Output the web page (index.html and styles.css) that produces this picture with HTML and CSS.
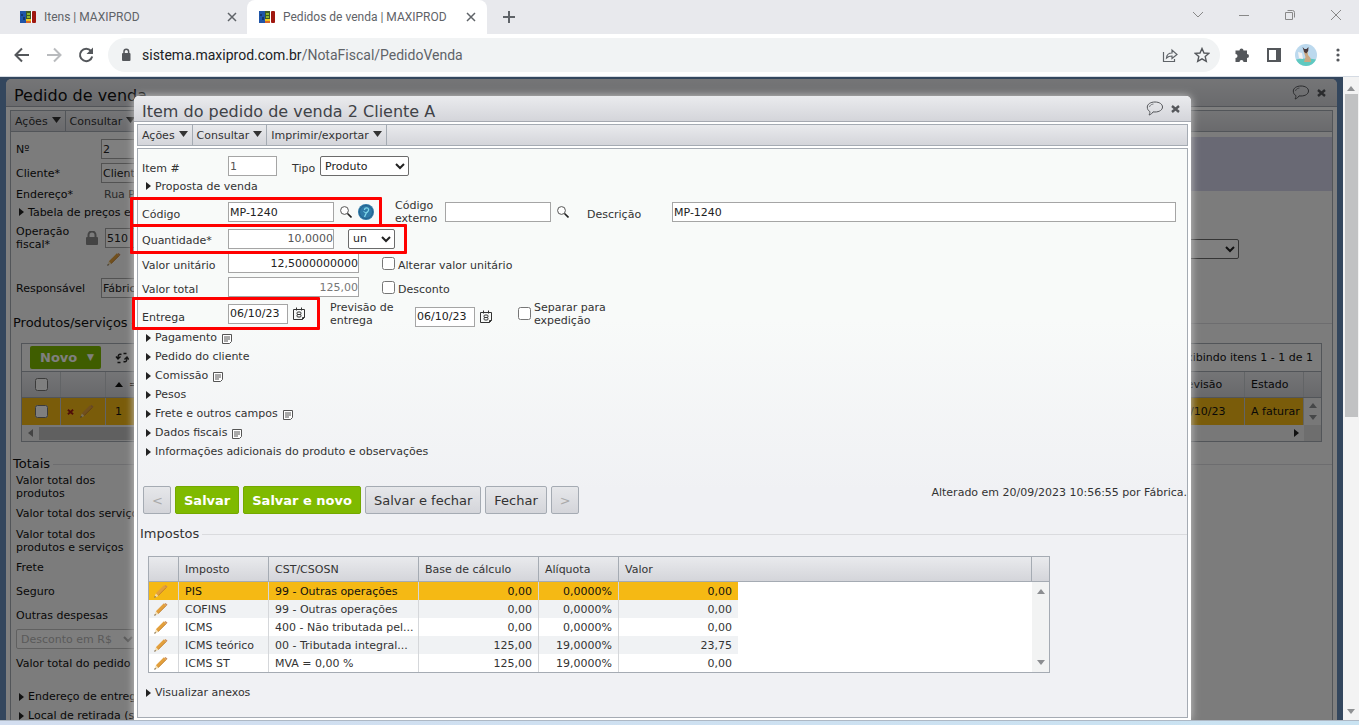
FILE: index.html
```html
<!DOCTYPE html>
<html lang="pt-BR">
<head>
  <meta charset="UTF-8" />
  <meta name="viewport" content="width=device-width, initial-scale=1.0"/>
  <title>Pedidos de venda | MAXIPROD</title>
  <link rel="stylesheet" href="styles.css">
</head>
<body>

  <!-- shared icons -->
  <svg class="sprite" aria-hidden="true">
    <symbol id="logo" viewBox="0 0 16 12">
      <rect x="0" y="0" width="6" height="12" fill="#1f55a8"/>
      <path d="M1 3h2v2H1zM3 6h2v3H3z" fill="#16376f"/>
      <rect x="6" y="0" width="5" height="8" fill="#3d5a24"/>
      <path d="M7 2h3v2H7zM7 5h3v2H7z" fill="#8db52c"/>
      <rect x="6" y="8" width="5" height="2" fill="#f0c81c"/>
      <rect x="6" y="10" width="5" height="2" fill="#d9672b"/>
      <path d="M11 0h1v12h-1z" fill="#fff"/>
      <rect x="12" y="0" width="4" height="12" rx="1" fill="#a01810"/>
    </symbol>
    <symbol id="x" viewBox="0 0 10 10"><path d="M1 1l8 8M9 1L1 9" stroke="currentColor" fill="none"/></symbol>
    <symbol id="x-bold" viewBox="0 0 9 8"><path d="M1 1l7 6M8 1L1 7" stroke="currentColor" stroke-width="2.4" fill="none"/></symbol>
    <symbol id="bubble" viewBox="0 0 18 15">
      <path d="M9 1c4.500 0 7.500 2.200 7.500 5s-3 5-7.500 5l-2-.1C6 12.500 5 13.500 3 14c.8-1.200 1-2.200.8-3.500C2 9.500 1.300 8 1.300 6c0-2.800 3.200-5 7.700-5z" stroke="currentColor" fill="none"/>
      <path d="M3.500 6c.2-1.500 1.500-2.700 4-3" stroke="currentColor" fill="none" stroke-width=".7"/>
    </symbol>
    <symbol id="down" viewBox="0 0 9 6"><path d="M0 0h9L4.500 6z" fill="currentColor"/></symbol>
    <symbol id="pencil" viewBox="0 0 14 13">
      <path d="M3 9.500L11 1.500" stroke="#e3a03c" stroke-width="3.200" fill="none"/>
      <path d="M4 10.800L12.400 2.400" stroke="#b9772a" stroke-width=".8" fill="none"/>
      <path d="M10.500 1l1-1 2 1.800-1 1z" fill="#c98a55"/>
      <path d="M1.800 8.600L.3 12.700l4-1.700z" fill="#f2dcae"/>
      <path d="M.9 11.100l-.6 1.700 1.700-.7z" fill="#4a3a28"/>
    </symbol>
    <symbol id="search" viewBox="0 0 12 12">
      <circle cx="4.500" cy="4.500" r="3.900" fill="#fff" stroke="#555"/>
      <path d="M7.500 7.500l4 4" stroke="#222" stroke-width="1.600"/>
    </symbol>
    <symbol id="help" viewBox="0 0 16 16">
      <circle cx="8" cy="8" r="8" fill="#2f7aa8"/>
      <circle cx="8" cy="8" r="6.500" fill="none" stroke="#24618c"/>
      <path d="M6.500 6C6.500 3 10.800 3.200 10.600 6 10.500 8 8.500 8 8 9.500L6.500 13" stroke="#7fd6e8" stroke-width="1.300" fill="none"/>
      <path d="M5.500 7.500L8 9" stroke="#7fd6e8"/>
    </symbol>
    <symbol id="calendar" viewBox="0 0 12 13">
      <path d="M.5 2.500h11v8l-2 2h-9zM3.500.5v3M8.500.5v3M11.500 10.500h-2v2" stroke="#333" fill="none"/>
      <rect x="4" y="5" width="4" height="2.500" rx="1" stroke="#333" fill="none"/>
      <rect x="4" y="7.500" width="4" height="2.500" rx="1" stroke="#333" fill="none"/>
    </symbol>
    <symbol id="note" viewBox="0 0 10 10">
      <path d="M.5.5h9v7l-2 2h-7z" stroke="#555" fill="#fff"/>
      <path d="M2 3h6M2 5h6M2 7h4" stroke="#555"/>
    </symbol>
    <symbol id="up-small" viewBox="0 0 8 5"><path d="M0 5h8L4 0z" fill="currentColor"/></symbol>
    <symbol id="down-small" viewBox="0 0 8 5"><path d="M0 0h8L4 5z" fill="currentColor"/></symbol>
  </svg>

  <header class="browser">
    <div class="tabs">
      <div class="tab">
        <svg class="favicon"><use href="#logo"/></svg>
        <span class="tab-title">Itens | MAXIPROD</span>
        <button class="plain" aria-label="Fechar aba"><svg width="10" height="10" stroke-width="1.500"><use href="#x"/></svg></button>
      </div>
      <div class="tab active">
        <svg class="favicon"><use href="#logo"/></svg>
        <span class="tab-title">Pedidos de venda | MAXIPROD</span>
        <button class="plain" aria-label="Fechar aba"><svg width="10" height="10" stroke-width="1.500"><use href="#x"/></svg></button>
      </div>
      <button class="plain new-tab" aria-label="Nova aba"><svg width="12" height="12"><path d="M6 0v12M0 6h12" stroke="currentColor" stroke-width="2"/></svg></button>
      <div class="window-buttons">
        <button class="plain" aria-label="Abas"><svg width="12" height="8"><path d="M1 1l5 5 5-5" stroke="currentColor" fill="none"/></svg></button>
        <button class="plain" aria-label="Minimizar"><svg width="12" height="12"><path d="M1 6.500h10" stroke="currentColor"/></svg></button>
        <button class="plain" aria-label="Restaurar"><svg width="12" height="12"><path d="M1.500 3.500h7v7h-7zM3.500 1.500h5q2 0 2 2v5" stroke="currentColor" fill="none"/></svg></button>
        <button class="plain" aria-label="Fechar"><svg width="12" height="12"><path d="M1 1l10 10M11 1L1 11" stroke="currentColor"/></svg></button>
      </div>
    </div>
    <div class="toolbar">
      <button class="plain" aria-label="Voltar"><svg width="16" height="16"><path d="M15 8H2M8 1.500L1.500 8 8 14.500" stroke="#54575b" stroke-width="2" fill="none"/></svg></button>
      <button class="plain" aria-label="Avançar"><svg width="16" height="16"><path d="M1 8h13M8 1.500L14.500 8 8 14.500" stroke="#b9bbbe" stroke-width="2" fill="none"/></svg></button>
      <button class="plain" aria-label="Recarregar"><svg width="16" height="16"><path d="M13 4A6.200 6.200 0 1 0 14.200 9.500" stroke="#54575b" stroke-width="2" fill="none"/><path d="M15 .5V7H8.500z" fill="#54575b"/></svg></button>
      <div class="omnibox">
        <svg width="10" height="14"><rect x="1" y="5" width="8.500" height="8" rx="1" fill="#54575b"/><path d="M3 6V3.500a2.300 2.300 0 0 1 4.600 0V6" stroke="#54575b" stroke-width="1.500" fill="none"/></svg>
        <span class="url">sistema.maxiprod.com.br<span class="path">/NotaFiscal/PedidoVenda</span></span>
        <button class="plain" aria-label="Compartilhar"><svg width="16" height="16"><path d="M1.500 5v9.500h11V12M4.500 11c.3-3.500 2.500-5 5.500-5V3l5 4.500-5 4V9c-2.500 0-4 .5-5.500 2z" stroke="#5f6368" stroke-width="1.200" fill="none"/></svg></button>
        <button class="plain" aria-label="Favoritar"><svg width="16" height="16"><path d="M8 1.500l2 4.500 4.800.4-3.600 3.200 1.100 4.800L8 11.900l-4.300 2.500 1.100-4.800L1.200 6.400 6 6z" stroke="#54575b" stroke-width="1.400" fill="none"/></svg></button>
      </div>
      <button class="plain" aria-label="Extensões"><svg width="16" height="16"><path d="M2 3.500h3.500a2 2 0 1 1 4 0H13V7a2 2 0 1 1 0 4v4H9.500a2 2 0 0 0-4 0H1.500v-4a2 2 0 0 0 0-4V3.500z" fill="#54575b"/></svg></button>
      <button class="plain" aria-label="Painel lateral"><svg width="16" height="16"><path d="M2 2h12v12H2z" fill="none" stroke="#54575b" stroke-width="2"/><path d="M10 2h4v12h-4z" fill="#54575b"/></svg></button>
      <button class="plain avatar" aria-label="Perfil"><svg width="22" height="22"><circle cx="11" cy="11" r="11" fill="#bcd9ee"/><path d="M1 15.500a11 11 0 0 0 20 0q-10-2-20 0z" fill="#5fc9c0"/><path d="M8.500 7h4l.5 4 2.500 3 .5 4H9l1.500-5z" fill="#caa883"/><path d="M7.500 3l2 2h2l2-2-.3 4-2 2.500-2-1.500z" fill="#4a3a3c"/><path d="M3 8l4 1 1 6-4-1z" fill="#f4f4f4"/></svg></button>
      <button class="plain" aria-label="Menu"><svg width="16" height="16"><circle cx="8" cy="3" r="1.600" fill="#54575b"/><circle cx="8" cy="8" r="1.600" fill="#54575b"/><circle cx="8" cy="13" r="1.600" fill="#54575b"/></svg></button>
    </div>
  </header>

  <div class="viewport">
    <main class="page">

      <!-- order window, behind the dialog -->
      <section class="window">
        <div class="title-bar">
          <h1>Pedido de venda</h1>
          <svg width="18" height="15"><use href="#bubble"/></svg>
          <svg width="9" height="8"><use href="#x-bold"/></svg>
        </div>
        <div class="window-body">
          <nav class="menu">
            <button>Ações <svg><use href="#down"/></svg></button>
            <button>Consultar <svg><use href="#down"/></svg></button>
          </nav>
          <div class="order">
            <div class="order-top">
              <div class="order-fields">
                <div class="order-row"><label for="numero">Nº</label><input id="numero" value="2"></div>
                <div class="order-row"><label for="cliente">Cliente*</label><input id="cliente" value="Cliente"></div>
                <div class="order-row low"><span class="caption">Endereço*</span><span class="address">Rua P</span></div>
              </div>
              <div class="notice"></div>
            </div>
            <a href="#" class="toggle low">Tabela de preços e</a>
            <div class="operation">
              <div>
                <div class="operation-row">
                  <label for="operacao">Operação<br>fiscal*</label>
                  <svg width="12" height="14"><rect x="0" y="6" width="12" height="8" rx="1" fill="#888"/><path d="M2.500 7V4a3.500 3.500 0 0 1 7 0v3" stroke="#888" stroke-width="2" fill="none"/></svg>
                  <input id="operacao" value="510">
                </div>
                <svg class="edit" width="14" height="13"><use href="#pencil"/></svg>
              </div>
              <select aria-label="Forma"><option></option></select>
            </div>
            <div class="order-row responsible"><label for="responsavel">Responsável</label><input id="responsavel" value="Fábrica"></div>

            <h2 class="legend products">Produtos/serviços</h2>
            <div class="items">
              <div class="items-bar">
                <button class="new">Novo <small>▼</small></button>
                <svg width="14" height="12"><path d="M6.500 2.500C4 1.500 3 3 3 6M1 4.500L3 7l2.500-2.500M2.500 10.500h3M8.500 9.500C11 10.500 12 9 12 6M9.500 7.500L12 5l2 2.500M8.500 1.500h3" stroke="#222" stroke-width="1.400" fill="none"/></svg>
                <span class="count">Exibindo itens 1 - 1 de 1</span>
              </div>
              <div class="items-line items-head">
                <span class="tick"><input type="checkbox" aria-label="Todos"></span>
                <span class="tools"></span>
                <span class="position"><svg width="8" height="5"><use href="#up-small"/></svg> =</span>
                <span class="date">Previsão</span>
                <span class="state">Estado</span>
                <span class="end"></span>
              </div>
              <div class="items-line items-row">
                <span class="tick"><input type="checkbox" aria-label="Item 1"></span>
                <span class="tools"><svg width="7" height="6" color="#a01c10"><use href="#x-bold"/></svg><svg width="14" height="13"><use href="#pencil"/></svg></span>
                <span class="position">1</span>
                <span class="date">06/10/23</span>
                <span class="state">A faturar</span>
                <span class="end arrows"><svg width="8" height="5"><use href="#up-small"/></svg><svg width="8" height="5"><use href="#down-small"/></svg></span>
              </div>
              <div class="items-scroll"><i class="left"></i><i class="bar"></i><i class="right"></i><i class="corner"></i></div>
            </div>

            <h2 class="legend totals">Totais</h2>
            <ul class="sums">
              <li>Valor total dos<br>produtos</li>
              <li>Valor total dos serviços</li>
              <li class="tall">Valor total dos<br>produtos e serviços</li>
              <li>Frete</li>
              <li>Seguro</li>
              <li>Outras despesas</li>
              <li><select disabled aria-label="Desconto"><option>Desconto em R$</option></select></li>
              <li>Valor total do pedido</li>
            </ul>
            <a href="#" class="toggle">Endereço de entrega</a>
            <a href="#" class="toggle">Local de retirada (s</a>
          </div>
        </div>
      </section>

      <div class="shade"></div>

      <section class="dialog" role="dialog" aria-labelledby="dialog-title">
        <div class="title-bar">
          <h1 id="dialog-title">Item do pedido de venda 2 Cliente A</h1>
          <svg width="18" height="15"><use href="#bubble"/></svg>
          <svg width="9" height="8"><use href="#x-bold"/></svg>
        </div>
        <div class="dialog-body">
          <nav class="menu">
            <button>Ações <svg><use href="#down"/></svg></button>
            <button>Consultar <svg><use href="#down"/></svg></button>
            <button>Imprimir/exportar <svg><use href="#down"/></svg></button>
          </nav>
          <form class="item-form">
            <div class="row">
              <label class="name" for="item">Item #</label>
              <input id="item" class="w-small muted" value="1">
              <label class="type" for="tipo">Tipo</label>
              <select id="tipo" class="w-type"><option>Produto</option></select>
            </div>
            <a href="#" class="toggle proposal">Proposta de venda</a>

            <div class="row code marked">
              <label class="name" for="codigo">Código</label>
              <input id="codigo" class="w-medium" value="MP-1240">
              <svg class="find" width="12" height="12"><use href="#search"/></svg>
              <svg class="info" width="16" height="16"><use href="#help"/></svg>
              <label class="external" for="externo">Código externo</label>
              <input id="externo" class="w-medium">
              <svg class="find" width="12" height="12"><use href="#search"/></svg>
              <label class="description" for="descricao">Descrição</label>
              <input id="descricao" class="w-fill" value="MP-1240">
            </div>
            <div class="row quantity marked">
              <label class="name" for="quantidade">Quantidade*</label>
              <input id="quantidade" class="w-medium number muted" value="10,0000">
              <select class="w-unit" aria-label="Unidade"><option>un</option></select>
            </div>
            <div class="row">
              <label class="name" for="unitario">Valor unitário</label>
              <input id="unitario" class="w-large number" value="12,5000000000">
              <input type="checkbox" id="alterar"><label for="alterar">Alterar valor unitário</label>
            </div>
            <div class="row">
              <label class="name" for="total">Valor total</label>
              <input id="total" class="w-large number faded" value="125,00">
              <input type="checkbox" id="desconto"><label for="desconto">Desconto</label>
            </div>
            <div class="row delivery marked">
              <label class="name" for="entrega">Entrega</label>
              <input id="entrega" class="w-date" value="06/10/23">
              <svg class="day" width="12" height="13"><use href="#calendar"/></svg>
              <label class="forecast" for="previsao">Previsão de<br>entrega</label>
              <div class="planned">
                <input id="previsao" class="w-date" value="06/10/23">
                <svg class="day" width="12" height="13"><use href="#calendar"/></svg>
              </div>
              <input type="checkbox" id="separar"><label class="split" for="separar">Separar para<br>expedição</label>
            </div>

            <a href="#" class="toggle">Pagamento <svg><use href="#note"/></svg></a>
            <a href="#" class="toggle">Pedido do cliente</a>
            <a href="#" class="toggle">Comissão <svg><use href="#note"/></svg></a>
            <a href="#" class="toggle">Pesos</a>
            <a href="#" class="toggle">Frete e outros campos <svg><use href="#note"/></svg></a>
            <a href="#" class="toggle">Dados fiscais <svg><use href="#note"/></svg></a>
            <a href="#" class="toggle">Informações adicionais do produto e observações</a>

            <div class="actions">
              <button type="button" disabled>&lt;</button>
              <button type="button" class="primary">Salvar</button>
              <button type="button" class="primary">Salvar e novo</button>
              <button type="button">Salvar e fechar</button>
              <button type="button">Fechar</button>
              <button type="button" disabled>&gt;</button>
              <span class="changed">Alterado em 20/09/2023 10:56:55 por Fábrica.</span>
            </div>

            <h2 class="legend">Impostos</h2>
            <table class="taxes">
              <colgroup><col class="c-edit"><col class="c-tax"><col class="c-cst"><col class="c-base"><col class="c-rate"><col class="c-value"><col><col class="c-scroll"></colgroup>
              <thead>
                <tr><th></th><th>Imposto</th><th>CST/CSOSN</th><th>Base de cálculo</th><th>Alíquota</th><th colspan="2">Valor</th><th></th></tr>
              </thead>
              <tbody>
                <tr class="selected">
                  <td><svg><use href="#pencil"/></svg></td><td>PIS</td><td>99 - Outras operações</td><td>0,00</td><td>0,0000%</td><td>0,00</td>
                  <td class="blank" rowspan="5"></td>
                  <td class="scroll" rowspan="5"><div class="arrows"><svg width="8" height="5"><use href="#up-small"/></svg><svg width="8" height="5"><use href="#down-small"/></svg></div></td>
                </tr>
                <tr><td><svg><use href="#pencil"/></svg></td><td>COFINS</td><td>99 - Outras operações</td><td>0,00</td><td>0,0000%</td><td>0,00</td></tr>
                <tr><td><svg><use href="#pencil"/></svg></td><td>ICMS</td><td>400 - Não tributada pel...</td><td>0,00</td><td>0,0000%</td><td>0,00</td></tr>
                <tr><td><svg><use href="#pencil"/></svg></td><td>ICMS teórico</td><td>00 - Tributada integral...</td><td>125,00</td><td>19,0000%</td><td>23,75</td></tr>
                <tr><td><svg><use href="#pencil"/></svg></td><td>ICMS ST</td><td>MVA = 0,00 %</td><td>125,00</td><td>19,0000%</td><td>0,00</td></tr>
              </tbody>
            </table>
            <a href="#" class="toggle attachments">Visualizar anexos</a>
          </form>
        </div>
      </section>
    </main>

    <div class="scrollbar">
      <svg width="8" height="5"><use href="#up-small"/></svg>
      <div class="thumb"></div>
      <svg width="8" height="5"><use href="#down-small"/></svg>
    </div>
  </div>
  <footer class="taskbar"></footer>

</body>
</html>
```

FILE: styles.css
```css
*, *::before, *::after {
  box-sizing: border-box;
}

* {
  margin: 0;
  padding: 0;
}

body {
  font-family: Verdana, 'DejaVu Sans', sans-serif;
  font-size: 11px;
  line-height: 13px;
  color: #333;
  display: flex;
  flex-direction: column;
  height: 100vh;
  overflow: hidden;
}

.sprite {
  position: absolute;
  width: 0;
  height: 0;
}

svg {
  display: block;
  flex: none;
}

a {
  color: inherit;
  text-decoration: none;
}

input, select, button {
  font: inherit;
}

.plain {
  display: flex;
  align-items: center;
  justify-content: center;
  border: none;
  background: none;
  color: #5f6368;
}

/* browser frame */
.browser {
  font-family: 'Segoe UI', Roboto, sans-serif;
  flex: none;
}

.tabs {
  display: flex;
  height: 34px;
  background: #e8e9ed;
}

.tab {
  display: flex;
  align-items: center;
  gap: 8px;
  width: 247px;
  padding: 0 10px 0 20px;
  font-size: 12px;
  color: #5f6368;
}

.tab.active {
  width: 240px;
  padding: 0 11px 0 12px;
  background: #fff;
  border-radius: 8px 8px 0 0;
}

.tab-title {
  flex: 1;
  white-space: nowrap;
}

.favicon {
  width: 16px;
  height: 12px;
}

.new-tab {
  width: 44px;
}

.window-buttons {
  display: flex;
  margin-left: auto;
  padding-bottom: 5px;
}

.window-buttons .plain {
  width: 46px;
  color: #888;
}

.toolbar {
  display: flex;
  align-items: center;
  gap: 16px;
  height: 43px;
  padding: 0 13px 0 14px;
  background: #fff;
  border-bottom: 1px solid #d5dbe3;
}

.omnibox {
  display: flex;
  align-items: center;
  flex: 1;
  gap: 16px;
  height: 34px;
  margin: 0 -2px 0 -2px;
  padding: 0 10px 0 13px;
  border-radius: 17px;
  background: #f1f3f4;
}

.url {
  flex: 1;
  margin-left: -5px;
  font-size: 14px;
  line-height: 20px;
  color: #202124;
}

.url .path {
  color: #5f6368;
}

.toolbar .avatar {
  margin: 0 -3px;
}

/* page area */
.viewport {
  display: flex;
  flex: 1;
  min-height: 0;
}

.page {
  position: relative;
  flex: 1;
  min-width: 0;
  padding: 2px 6px 0 6px;
  overflow: hidden;
  background: #668cbb;
}

.scrollbar {
  display: flex;
  flex-direction: column;
  align-items: center;
  width: 16px;
  padding: 9px 0 6px;
  background: #f3f3f3;
  color: #8f9193;
}

.thumb {
  width: 13px;
  height: 323px;
  margin: 3px 0 auto;
  background: #c1c2c3;
}

.taskbar {
  flex: none;
  height: 5px;
  border-top: 1px solid #aeb8c4;
  background: linear-gradient(to right, #d3def0, #c9e3f2);
}

/* window pieces */
.title-bar {
  display: flex;
  align-items: center;
  gap: 7px;
  height: 26px;
  padding: 0 11px 0 8px;
  border-bottom: 1px solid #a5a9b1;
  border-radius: 5px 5px 0 0;
  background: linear-gradient(#eaebee, #d4d5da);
  color: #55575b;
}

.title-bar h1 {
  flex: 1;
  padding-top: 6px;
  font-size: 16px;
  font-weight: normal;
  line-height: 20px;
  color: #404247;
}

.menu {
  display: flex;
  height: 22px;
  border: 1px solid #a5abb3;
  background: linear-gradient(#e9eaed, #d4d5da);
}

.menu button {
  display: flex;
  align-items: center;
  gap: 4px;
  padding: 0 4px;
  border: none;
  border-right: 1px solid #a5abb3;
  background: none;
  color: #333;
}

.menu svg {
  width: 9px;
  height: 6px;
  margin-bottom: 3px;
}

.legend {
  display: flex;
  align-items: center;
  gap: 3px;
  font-size: 13px;
  font-weight: normal;
  line-height: 18px;
}

.legend::after {
  content: "";
  flex: 1;
  border-top: 1px solid #dadbde;
}

.toggle {
  display: flex;
  align-items: center;
  height: 19px;
  padding-left: 8px;
}

.toggle::before {
  content: "";
  margin-right: 4px;
  border: solid transparent;
  border-width: 4px 0 4px 5px;
  border-left-color: #222;
}

.toggle svg {
  width: 10px;
  height: 10px;
  margin: 3px 0 0 5px;
}

input:not([type="checkbox"]) {
  min-width: 0;
  height: 20px;
  padding: 0 0 0 1px;
  border: 1px solid #a5a5a5;
  background: #fff;
  color: #222;
}

input[type="checkbox"] {
  flex: none;
  width: 13px;
  height: 13px;
}

select {
  height: 20px;
  border: 1px solid #6b6b6b;
  border-radius: 2px;
  background: #fff;
  color: #222;
}

.arrows {
  display: flex;
  flex-direction: column;
  align-items: center;
  justify-content: space-between;
  color: #8c8e91;
}

/* order window */
.window {
  height: 800px;
  border-radius: 6px 6px 0 0;
  background: #fff;
  color: #111;
}

.window .title-bar {
  height: 28px;
}

.window .title-bar h1 {
  color: #111;
}

.window-body {
  padding: 3px 4px;
}

.order {
  height: 680px;
  padding-top: 5px;
  border: 1px solid #a5abb3;
  border-top: none;
  background: #f8f8f8;
}

.order-top {
  display: flex;
  height: 66px;
}

.order-fields {
  width: 400px;
}

.notice {
  flex: 1;
  height: 54px;
  background: #d2d2e8;
}

.order-row {
  display: flex;
  align-items: center;
  height: 24px;
  padding-left: 5px;
}

.order-row label, .order-row .caption {
  width: 85px;
}

.order-row.low, .toggle.low {
  height: 18px;
}

.address {
  padding-left: 3px;
  color: #555;
}

.operation {
  display: flex;
  align-items: center;
  justify-content: space-between;
  height: 56px;
  padding-right: 93px;
}

.operation > div {
  height: 56px;
}

.operation > select {
  width: 300px;
}

.operation-row {
  display: flex;
  align-items: center;
  height: 34px;
  padding-left: 5px;
}

.operation-row label {
  width: 70px;
}

.operation-row input {
  margin-left: 7px;
}

.operation .edit {
  margin: -2px 0 0 96px;
}

.order-row.responsible {
  height: 22px;
}

.products {
  margin: 15px 0 11px 2px;
}

.items {
  margin: 0 10px;
  border: 1px solid #a5abb3;
}

.items-bar {
  display: flex;
  align-items: center;
  height: 27px;
  padding: 0 8px;
  gap: 14px;
}

.items-bar .new {
  display: flex;
  align-items: center;
  justify-content: space-between;
  width: 71px;
  height: 23px;
  padding: 0 7px 0 10px;
  border: none;
  border-radius: 2px;
  background: #7fba00;
  color: #fff;
  font-size: 13px;
  font-weight: bold;
}

.items-bar small {
  font-size: 9px;
}

.count {
  margin-left: auto;
}

.items-line {
  display: flex;
  height: 27px;
}

.items-line span {
  display: flex;
  align-items: center;
  gap: 6px;
  border-right: 1px solid #c5c8cc;
  padding: 0 6px;
  white-space: nowrap;
}

.items-line .tick {
  width: 39px;
  justify-content: center;
}

.items-line .tools {
  width: 45px;
}

.items-line .position {
  flex: 1;
  padding-left: 9px;
}

.items-line .date {
  width: 75px;
}

.items-line .state {
  width: 59px;
}

.items-line .end {
  width: 17px;
  padding: 5px 0;
  border-right: none;
}

.items-head {
  border-top: 1px solid #a5abb3;
  border-bottom: 1px solid #a5abb3;
  background: linear-gradient(#e9eaed, #d0d1d6);
}

.items-row {
  background: #f5b914;
}

.items-row .end {
  background: #f1f1f1;
}

.items-scroll {
  display: flex;
  align-items: center;
  height: 16px;
  padding-left: 6px;
  background: #f1f1f1;
}

.items-scroll .left, .items-scroll .right {
  border: solid transparent;
  border-width: 4px 5px 4px 0;
  border-right-color: #888;
}

.items-scroll .right {
  margin: 0 5px 0 auto;
  border-width: 4px 0 4px 5px;
  border-left-color: #222;
}

.items-scroll .bar {
  width: 900px;
  height: 13px;
  margin-left: 6px;
  background: #c1c1c1;
}

.items-scroll .corner {
  width: 17px;
  height: 16px;
  background: #dcdcdc;
}

.totals {
  margin: 13px 0 1px 2px;
}

.sums {
  list-style: none;
  padding: 0 0 12px 5px;
}

.sums li {
  display: flex;
  align-items: center;
  height: 24px;
}

.sums li:nth-child(-n+2) {
  height: 26px;
}

.sums li.tall {
  height: 29px;
}

.sums select {
  width: 121px;
  border-color: #aaa;
  color: #999;
}

.shade {
  position: absolute;
  inset: 0;
  background: rgba(0, 0, 0, 0.5);
}

/* item dialog */
.dialog {
  position: absolute;
  top: 19px;
  right: 152px;
  bottom: 0;
  left: 134px;
  display: flex;
  flex-direction: column;
  border-radius: 5px 5px 0 0;
  background: #fff;
  box-shadow: 0 0 8px #c8c8c8;
}

.dialog-body {
  display: flex;
  flex: 1;
  flex-direction: column;
  gap: 2px;
  min-height: 0;
  padding: 2px 3px 2px 3px;
}

.item-form {
  flex: 1;
  padding-top: 4px;
  border: 1px solid #a5abb3;
  background: linear-gradient(#f8faf9, #f8faf9 30%, #f0f1f4 60%);
}

.row {
  position: relative;
  display: flex;
  align-items: center;
  height: 24px;
  padding: 0 11px 0 4px;
}

.row:first-child {
  height: 26px;
}

.row label {
  padding-top: 4px;
}

.row .name {
  width: 86px;
}

.row .type {
  width: 28px;
  margin-left: 15px;
}

.w-small {
  width: 49px;
}

.w-type {
  width: 89px;
}

.w-medium {
  width: 106px;
}

.w-large {
  width: 131px;
}

.w-date {
  width: 60px;
}

.w-unit {
  width: 47px;
  margin-left: 14px;
}

.w-fill {
  flex: 1;
}

.number {
  text-align: right;
}

.row .muted {
  color: #555;
}

.row .faded {
  color: #777;
}

.row input[type="checkbox"] {
  margin: 0 3px 0 23px;
}

.proposal {
  height: 14px;
  margin-bottom: 5px;
}

.row.code {
  height: 28px;
}

.row.quantity {
  height: 25px;
}

.row.delivery {
  height: 29px;
}

.row.delivery .name {
  padding-top: 8px;
}

.row.delivery input[type="checkbox"] {
  margin-left: 26px;
}

.planned {
  display: flex;
  align-items: center;
  padding-top: 6px;
}

.find {
  margin-left: 6px;
}

.info {
  margin-left: 6px;
}

.row .external {
  width: 50px;
  margin-left: 21px;
  padding-top: 0;
}

.row .description {
  width: 85px;
  margin-left: 18px;
}

.day {
  margin-left: 5px;
}

.row .forecast {
  width: 85px;
  margin-left: 25px;
  padding-top: 0;
}

.row .split {
  padding-top: 0;
}

/* highlight frames over the fields to fill in */
.marked::after {
  content: "";
  position: absolute;
  z-index: 1;
  top: -1px;
  left: -8px;
  width: 252px;
  height: 30px;
  border: 3px solid #f00;
  border-radius: 1px;
  pointer-events: none;
}

.quantity::after {
  top: -2px;
  width: 277px;
}

.delivery::after {
  top: -2px;
  left: -6px;
  width: 188px;
  height: 33px;
}

.actions {
  display: flex;
  gap: 4px;
  margin: 25px 0 11px 5px;
}

.actions button {
  height: 28px;
  padding: 0 8px;
  border: 1px solid #a5abb3;
  border-radius: 2px;
  background: linear-gradient(#e6e7ea, #d4d5da);
  color: #333;
  font-size: 13px;
}

.actions button:disabled {
  width: 28px;
  color: #aaa;
}

.actions .primary {
  border-color: #74a800;
  background: #7fba00;
  color: #fff;
  font-weight: bold;
}

.changed {
  margin-left: auto;
}

.item-form .legend {
  margin: 0 0 13px 2px;
}

.taxes {
  table-layout: fixed;
  width: 902px;
  margin-left: 10px;
  border: 1px solid #a5abb3;
  border-spacing: 0;
  background: #fff;
}

.c-edit {
  width: 30px;
}

.c-tax {
  width: 90px;
}

.c-cst {
  width: 150px;
}

.c-base {
  width: 120px;
}

.c-value {
  width: 119px;
}

.c-rate {
  width: 80px;
}

.c-scroll {
  width: 17px;
}

.taxes th {
  height: 25px;
  padding: 0 6px;
  border-right: 1px solid #a5abb3;
  border-bottom: 1px solid #a5abb3;
  background: linear-gradient(#e9eaed, #d4d5da);
  font-weight: normal;
  text-align: left;
}

.taxes th:last-child, .taxes td:nth-child(6), .taxes .blank, .taxes .scroll {
  border-right: none;
}

.taxes td {
  height: 18px;
  padding: 0 6px;
  border-right: 1px solid #d5d7da;
  white-space: nowrap;
}

.taxes td:nth-child(n+4) {
  text-align: right;
}

.taxes td svg {
  width: 14px;
  height: 13px;
}

.taxes td:first-child {
  padding: 0 5px;
}

.taxes tr:nth-child(even) td {
  background: #f0f2f4;
}

.taxes .selected td {
  background: #f5b914;
  color: #111;
}

.taxes .selected .blank {
  background: #fff;
}

.taxes .selected .scroll {
  padding: 0;
  background: #f2f3f3;
}

.taxes .arrows {
  height: 76px;
}

.taxes .arrows svg {
  width: 8px;
  height: 5px;
}

.attachments {
  margin-top: 10px;
}
```
